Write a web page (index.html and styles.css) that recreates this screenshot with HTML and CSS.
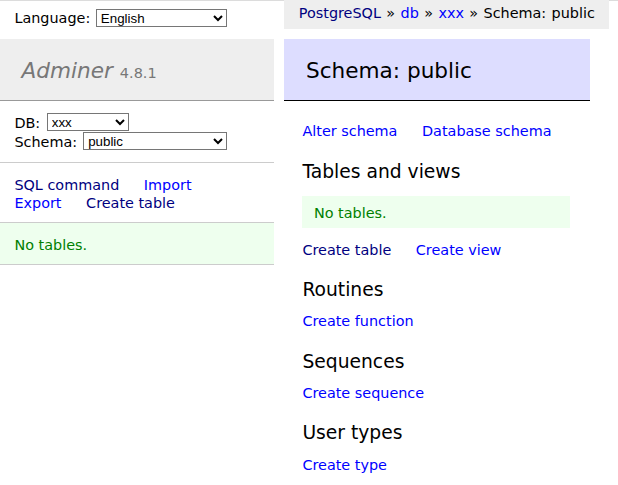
FILE: index.html
```html
<!DOCTYPE html>
<html lang="en">
<head>
<meta charset="utf-8">
<title>Schema: public - Adminer</title>
<link rel="stylesheet" href="styles.css">
</head>
<body>
<div class="page">
  <aside class="side">
    <form class="lang">Language: <select class="sel sel-lang"><option>English</option></select></form>
    <nav class="menu">
      <h1 class="logo"><a class="logo-link" href="#">Adminer</a> <span class="version">4.8.1</span></h1>
      <form class="menu-p dbs">DB: <select class="sel sel-db"><option>xxx</option></select><br>Schema: <select class="sel sel-schema"><option>public</option></select></form>
      <p class="menu-p menu-links">
        <a class="lnk lnk-visited" href="#">SQL command</a>
        <a class="lnk" href="#">Import</a>
        <a class="lnk" href="#">Export</a>
        <a class="lnk lnk-visited" href="#">Create table</a>
      </p>
      <p class="menu-p message">No tables.</p>
    </nav>
  </aside>
  <main class="main">
    <div class="breadcrumb"><a class="crumb crumb-visited" href="#">PostgreSQL</a> » <a class="crumb" href="#">db</a> » <a class="crumb" href="#">xxx</a> » Schema: public</div>
    <div class="content">
      <h2 class="title">Schema: public</h2>
      <p class="links"><a class="lnk" href="#">Alter schema</a> <a class="lnk" href="#">Database schema</a></p>
      <h3 class="section">Tables and views</h3>
      <p class="box-message">No tables.</p>
      <p class="links"><a class="lnk lnk-visited" href="#">Create table</a> <a class="lnk" href="#">Create view</a></p>
      <h3 class="section">Routines</h3>
      <p class="links"><a class="lnk" href="#">Create function</a></p>
      <h3 class="section">Sequences</h3>
      <p class="links"><a class="lnk" href="#">Create sequence</a></p>
      <h3 class="section">User types</h3>
      <p class="links"><a class="lnk" href="#">Create type</a></p>
    </div>
  </main>
</div>
</body>
</html>
```
FILE: styles.css
```css
html {
  background: #fff linear-gradient(#dcdcdc, #dcdcdc) top left / 100% 1px no-repeat;
}
body {
  margin: 0;
  color: #000;
  font: 14.4px/1.25 "DejaVu Sans", Verdana, sans-serif;
}
.page {
  display: grid;
  grid-template-columns: 273.6px 305.6px;
  column-gap: 10.8px;
  align-items: start;
}
.side {
  display: flex;
  flex-direction: column;
}
.lang {
  margin: 0;
  box-sizing: border-box;
  height: 28.8px;
  padding: 6.3px 14.4px 0;
  line-height: 25.92px;
  white-space: nowrap;
}
.sel {
  font: 13.33px "Liberation Sans", Arial, sans-serif;
  height: 18px;
  box-sizing: border-box;
  color: #000;
  background: #fff;
  border: 1px solid #767676;
  border-radius: 0;
  vertical-align: baseline;
}
.sel-lang { width: 131px; margin-left: 1px; }
.sel-db { width: 82px; margin-left: 2px; }
.sel-schema { width: 144px; margin-left: 1.5px; }
.menu {
  margin-top: 10px;
  padding-bottom: 30px;
}
.logo {
  margin: 0;
  font-size: 21.6px;
  line-height: 1.25;
  font-weight: normal;
  padding: 19.28px 21.6px 15.28px;
  border-bottom: 1px solid #999;
  background: #eee;
  color: #777;
}
.logo-link {
  color: #777;
  text-decoration: none;
  font-style: italic;
}
.version {
  font-size: 67%;
  color: #777;
}
.menu-p {
  margin: 0;
  padding: 11.52px 14.4px;
  border-bottom: 1px solid #ccc;
}
.dbs {
  line-height: 19px;
  padding-top: 12.5px;
  padding-bottom: 10.54px;
}
.dbs .sel {
  vertical-align: top;
  margin-top: -0.5px;
}
.menu-links {
  padding-top: 12.5px;
  padding-bottom: 10.54px;
}
.message {
  color: green;
  background: #efe;
  padding-top: 12.5px;
  padding-bottom: 10.54px;
}
a {
  color: blue;
  text-decoration: none;
}
.lnk {
  white-space: nowrap;
  margin-right: 20px;
}
.lnk-visited,
.crumb-visited {
  color: navy;
}
.breadcrumb {
  justify-self: start;
  box-sizing: border-box;
  white-space: nowrap;
  background: #eee;
  height: 28.8px;
  line-height: 25.92px;
  padding: 1.3px 14.4px 0;
  word-spacing: 0.8px;
}
.main {
  display: flex;
  flex-direction: column;
  align-items: flex-start;
}
.content {
  align-self: stretch;
  padding: 10px 0 20px 18px;
}
.title {
  margin: 0 0 20px -18px;
  font-size: 21.6px;
  line-height: 1.25;
  font-weight: normal;
  padding: 19.28px 21.6px 15.28px;
  border-bottom: 1px solid #000;
  background: #ddf;
  color: #000;
}
.links {
  margin: 11.52px 0 0;
  padding-top: 1px;
  margin-bottom: -1px;
}
.section {
  font-weight: normal;
  font-size: 18.72px;
  line-height: 1.25;
  margin: 18.72px 0 0;
  padding-top: 1.5px;
  margin-bottom: -1.5px;
}
.box-message {
  color: green;
  background: #efe;
  padding: 8.2px 11.52px 6.2px;
  margin: 14.4px 20px 0 0;
}
```
